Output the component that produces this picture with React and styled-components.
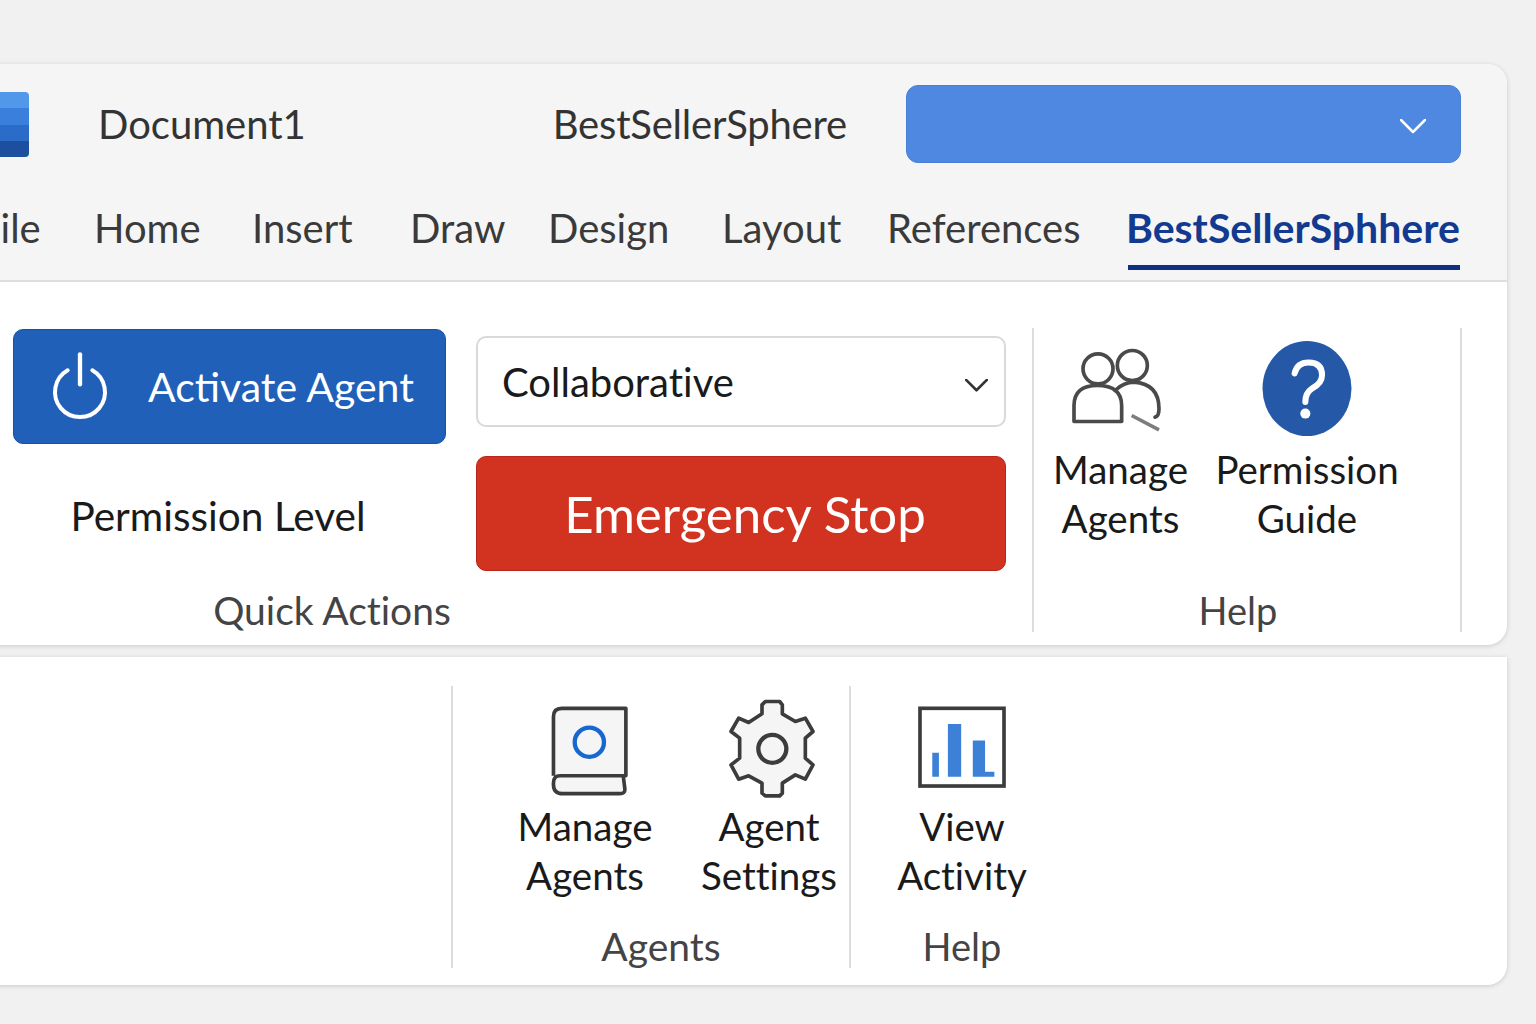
import React from 'react';
import styled, { createGlobalStyle } from 'styled-components';

const GlobalStyle = createGlobalStyle`
    html, body { margin: 0; padding: 0; background: #f1f1f1; }
    body { font-family: Lato, "Noto Sans", sans-serif; font-variant-ligatures: none; }
`;

const Page = styled.div`
    width: 1536px;
    height: 1024px;
    box-sizing: border-box;
    overflow: hidden;
    padding: 64px 29px 0 0;
    display: flex;
    flex-direction: column;
    gap: 12px;
`;

const Card = styled.section`
    margin-left: -40px;
    background: #fff;
    border-radius: ${p => (p.$flatTop ? '0 0 20px 0' : '0 20px 20px 0')};
    box-shadow: 0 1px 5px rgba(0, 0, 0, 0.16);
    overflow: hidden;
`;

const TitleBar = styled.div`
    height: 122px;
    box-sizing: border-box;
    padding: 21px 46px 0 4px;
    background: #f5f5f5;
    display: flex;
    align-items: flex-start;
`;

const Logo = styled.div`
    width: 65px;
    height: 65px;
    margin-top: 7px;
    border-radius: 4px;
    overflow: hidden;
    background: linear-gradient(180deg, #5298ea 0 25%, #3a7fdc 25% 50%, #2a6cc8 50% 75%, #1d4f9f 75% 100%);
`;

const TitleText = styled.div`
    font-size: 40px;
    line-height: 78px;
    color: #333;
    letter-spacing: ${p => p.$spacing || 0}px;
    margin-left: ${p => p.$offset || 'auto'};
`;

const AccountBox = styled.div`
    width: 555px;
    height: 78px;
    box-sizing: border-box;
    margin-left: 59px;
    padding: 5px 34px 0 0;
    background: #4f88e0;
    border: 1px solid #4a80d8;
    border-radius: 12px;
    display: flex;
    align-items: center;
    justify-content: flex-end;
`;

const Tabs = styled.nav`
    height: 96px;
    box-sizing: border-box;
    padding-left: 18px;
    background: #f5f5f5;
    border-bottom: 2px solid #dedede;
    display: flex;
    align-items: flex-start;
`;

const Tab = styled.div`
    width: ${p => p.$w}px;
    flex: none;
    box-sizing: border-box;
    padding: 17px 0 12px;
    font-size: ${p => (p.$active ? 41 : 40)}px;
    line-height: 50px;
    white-space: nowrap;
    text-indent: ${p => (p.$active ? -2 : 0)}px;
    color: ${p => (p.$active ? '#123a90' : '#3a3a3a')};
    font-weight: ${p => (p.$active ? 700 : 400)};
    border-bottom: 5px solid ${p => (p.$active ? '#0f2f85' : 'transparent')};
`;

const Ribbon = styled.div`
    display: flex;
    align-items: stretch;
    padding: ${p => p.$pad};
    height: ${p => p.$h}px;
    box-sizing: border-box;
`;

const Group = styled.div`
    width: ${p => p.$w}px;
    flex: none;
    box-sizing: border-box;
    display: flex;
    flex-direction: column;
    justify-content: space-between;
    border-right: ${p => (p.$line ? '2px solid #dcdcdc' : 'none')};
    padding-left: ${p => p.$left || 0}px;
`;

const GroupLabel = styled.div`
    font-size: ${p => p.$size || 39}px;
    line-height: 44px;
    height: 44px;
    color: #444;
    text-align: center;
    padding-left: ${p => p.$shiftL || 0}px;
    padding-right: ${p => p.$shiftR || 0}px;
`;

const ActionGrid = styled.div`
    display: grid;
    grid-template-columns: 433px 530px;
    column-gap: 30px;
`;

const LeftActions = styled.div`
    display: flex;
    flex-direction: column;
    padding-top: 1px;
`;

const RightActions = styled.div`
    display: flex;
    flex-direction: column;
    gap: 29px;
    padding-top: 8px;
`;

const ActivateButton = styled.button`
    height: 115px;
    box-sizing: border-box;
    padding: 0 0 0 36px;
    background: #2160b8;
    border: 1px solid #1a4fa8;
    border-radius: 10px;
    color: #fff;
    font-family: inherit;
    font-size: 41px;
    display: flex;
    align-items: center;
    gap: 38px;
`;

const PermissionLabel = styled.div`
    margin-top: 47px;
    font-size: 40.6px;
    line-height: 50px;
    text-align: center;
    padding-right: 23px;
    color: #1a1a1a;
`;

const Select = styled.div`
    height: 91px;
    box-sizing: border-box;
    padding: 0 16px 0 24px;
    background: #fff;
    border: 2px solid #d9d9d9;
    border-radius: 10px;
    font-size: 40px;
    color: #1a1a1a;
    display: flex;
    align-items: center;
    justify-content: space-between;
    svg { margin-top: 8px; }
`;

const StopButton = styled.button`
    height: 115px;
    box-sizing: border-box;
    padding: 0 0 0 8px;
    background: #d23220;
    border: 1px solid #b8261a;
    border-radius: 10px;
    color: #fff;
    font-family: inherit;
    font-size: 51px;
`;

const ToolRow = styled.div`
    display: flex;
    gap: ${p => p.$gap}px;
    padding-left: ${p => p.$left}px;
`;

const Tool = styled.div`
    width: ${p => p.$w}px;
    flex: none;
    display: flex;
    flex-direction: column;
    align-items: center;
`;

const ToolIcon = styled.div`
    height: ${p => p.$h}px;
    display: flex;
    align-items: center;
    justify-content: center;
    padding-top: ${p => p.$nudge || 0}px;
    margin-left: ${p => p.$shift || 0}px;
    box-sizing: border-box;
`;

const ToolText = styled.div`
    font-size: 38.5px;
    line-height: 48.5px;
    text-align: center;
    color: #1a1a1a;
    white-space: nowrap;
`;

const Chevron = ({ w, h, color, sw }) => (
    <svg width={w} height={h} viewBox="0 0 26 15" fill="none">
        <path d="M1 1 L13 13 L25 1" stroke={color} strokeWidth={sw} strokeLinecap="round" strokeLinejoin="round" />
    </svg>
);

const PowerIcon = () => (
    <svg width="60" height="70" viewBox="150 95 180 210" fill="none" stroke="#fff" strokeLinecap="round">
        <path d="M203 150 A75 75 0 1 0 277 150" strokeWidth="12" />
        <path d="M240 102 V192" strokeWidth="13" />
    </svg>
);

const PeopleIcon = () => (
    <svg width="95" height="87" viewBox="120 80 285 260" fill="none" stroke="#4a4a4a" strokeWidth="11" strokeLinecap="round" strokeLinejoin="round">
        <circle cx="207" cy="145" r="45" />
        <circle cx="310" cy="135" r="45" />
        <path d="M135 303 V255 Q135 195 205 195 Q278 195 278 255 V303 Z" />
        <path d="M258 210 Q285 185 315 185 Q390 190 390 265 Q390 288 378 290" />
        <path d="M308 285 L390 328" stroke="#7d7d7d" strokeWidth="11" strokeLinecap="butt" />
    </svg>
);

const HelpIcon = () => (
    <svg width="90" height="95" viewBox="697 63 266 284">
        <ellipse cx="830" cy="205" rx="133" ry="142" fill="#2559a8" />
        <path d="M793 160 Q800 127 835 127 Q875 127 875 165 Q875 190 845 205 Q825 218 825 245" fill="none" stroke="#fff" strokeWidth="18" strokeLinecap="round" />
        <circle cx="825" cy="280" r="15" fill="#fff" />
    </svg>
);

const BookIcon = () => (
    <svg width="80" height="93" viewBox="90 45 240 280">
        <path d="M100 258 V80 Q100 55 125 55 H318 V258 H120 Q100 258 100 280 V285 Q100 312 128 312 H300 Q316 312 315 298 L310 258" fill="#f5f5f5" stroke="#3c3c3c" strokeWidth="11" strokeLinejoin="round" />
        <circle cx="208" cy="157" r="44" fill="none" stroke="#1668d0" strokeWidth="13" />
    </svg>
);

const GearIcon = () => (
    <svg width="90" height="102" viewBox="620 25 270 305">
        <path d="M725 45 L735 35 H778 L786 45 V72 L825 95 L855 85 L878 125 L855 145 V205 L878 225 L855 268 L825 255 L786 280 V310 L778 318 H735 L725 310 V280 L685 258 L655 268 L632 225 L658 205 V145 L632 125 L655 85 L685 98 L725 72 Z" fill="#f5f5f5" stroke="#3c3c3c" strokeWidth="11" strokeLinejoin="round" />
        <circle cx="756" cy="177" r="42" fill="none" stroke="#3c3c3c" strokeWidth="13" />
    </svg>
);

const ChartIcon = () => (
    <svg width="88" height="82" viewBox="1195 50 265 245">
        <rect x="1201" y="56" width="253" height="234" fill="#fff" stroke="#3c3c3c" strokeWidth="11" />
        <path d="M1238 190 H1258 V262 H1238 Z M1285 103 H1325 V262 H1285 Z M1360 153 H1397 V247 H1425 V262 H1360 Z" fill="#3c80d8" />
    </svg>
);

export default function App() {
    return (
        <Page>
            <GlobalStyle />
            <Card>
                <TitleBar>
                    <Logo />
                    <TitleText $offset="69px">Document1</TitleText>
                    <TitleText $spacing={-0.2}>BestSellerSphere</TitleText>
                    <AccountBox>
                        <Chevron w={26} h={15} color="#fff" sw={2.5} />
                    </AccountBox>
                </TitleBar>
                <Tabs>
                    <Tab $w={116}>File</Tab>
                    <Tab $w={158}>Home</Tab>
                    <Tab $w={158}>Insert</Tab>
                    <Tab $w={138}>Draw</Tab>
                    <Tab $w={174}>Design</Tab>
                    <Tab $w={165}>Layout</Tab>
                    <Tab $w={241}>References</Tab>
                    <Tab $w={332} $active>BestSellerSphhere</Tab>
                </Tabs>
                <Ribbon $pad="46px 0 13px" $h={363}>
                    <Group $w={1074} $left={53} $line>
                        <ActionGrid>
                            <LeftActions>
                                <ActivateButton>
                                    <PowerIcon />
                                    Activate Agent
                                </ActivateButton>
                                <PermissionLabel>Permission Level</PermissionLabel>
                            </LeftActions>
                            <RightActions>
                                <Select>
                                    Collaborative
                                    <Chevron w={23} h={13} color="#333" sw={3} />
                                </Select>
                                <StopButton>Emergency Stop</StopButton>
                            </RightActions>
                        </ActionGrid>
                        <GroupLabel $shiftR={381}>Quick Actions</GroupLabel>
                    </Group>
                    <Group $w={428} $line>
                        <ToolRow $gap={29} $left={20}>
                            <Tool $w={133}>
                                <ToolIcon $h={117} $nudge={8} $shift={-8}><PeopleIcon /></ToolIcon>
                                <ToolText>Manage<br />Agents</ToolText>
                            </Tool>
                            <Tool $w={182}>
                                <ToolIcon $h={117} $nudge={3}><HelpIcon /></ToolIcon>
                                <ToolText>Permission<br />Guide</ToolText>
                            </Tool>
                        </ToolRow>
                        <GroupLabel $size={38} $shiftR={18}>Help</GroupLabel>
                    </Group>
                </Ribbon>
            </Card>
            <Card $flatTop>
                <Ribbon $pad="29px 0 17px" $h={328}>
                    <Group $w={493} $line />
                    <Group $w={398} $line>
                        <ToolRow $gap={24} $left={52}>
                            <Tool $w={160}>
                                <ToolIcon $h={116} $nudge={14} $shift={10}><BookIcon /></ToolIcon>
                                <ToolText>Manage<br />Agents</ToolText>
                            </Tool>
                            <Tool $w={160}>
                                <ToolIcon $h={116} $nudge={10} $shift={6}><GearIcon /></ToolIcon>
                                <ToolText>Agent<br />Settings</ToolText>
                            </Tool>
                        </ToolRow>
                        <GroupLabel $shiftL={20}>Agents</GroupLabel>
                    </Group>
                    <Group $w={222}>
                        <Tool $w={222}>
                            <ToolIcon $h={116} $nudge={6}><ChartIcon /></ToolIcon>
                            <ToolText>View<br />Activity</ToolText>
                        </Tool>
                        <GroupLabel $size={38}>Help</GroupLabel>
                    </Group>
                </Ribbon>
            </Card>
        </Page>
    );
}
